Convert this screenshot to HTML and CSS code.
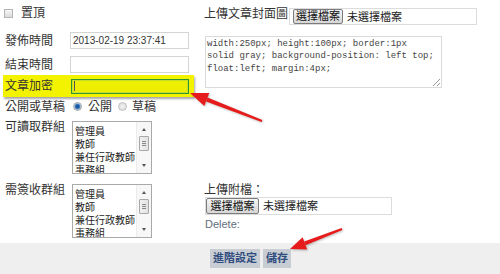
FILE: index.html
```html
<!DOCTYPE html>
<html lang="zh-Hant">
<head>
<meta charset="utf-8">
<title>文章設定</title>
<link rel="stylesheet" href="styles.css">
</head>
<body>
<div class="page">
  <div class="main">
    <div class="left">
      <div class="row row-top"><span class="checkbox"></span><span class="lbl-top">置頂</span></div>
      <div class="row r1"><span class="label">發佈時間</span><span class="input">2013-02-19 23:37:41</span></div>
      <div class="row r2"><span class="label">結束時間</span><span class="input"></span></div>
      <div class="row row-hl"><span class="label label-hl">文章加密</span><span class="input input-hl"><span class="caret"></span></span></div>
      <div class="row row-radio">
        <span class="label label-radio">公開或草稿</span>
        <span class="radio radio-on"></span><span class="radio-text">公開</span>
        <span class="radio radio-off"></span><span class="radio-text radio-text2">草稿</span>
      </div>
      <div class="row row-list">
        <span class="label label-list">可讀取群組</span>
        <div class="listbox">
          <div class="items"><div>管理員</div><div>教師</div><div>兼任行政教師</div><div>事務組</div></div>
          <div class="scroll"><span class="sc-up"></span><span class="thumb"><i></i><i></i><i></i></span><span class="sc-down"></span></div>
        </div>
      </div>
      <div class="row row-list row-list2">
        <span class="label label-list">需簽收群組</span>
        <div class="listbox listbox2">
          <div class="items"><div>管理員</div><div>教師</div><div>兼任行政教師</div><div>事務組</div></div>
          <div class="scroll"><span class="sc-up"></span><span class="thumb"><i></i><i></i><i></i></span><span class="sc-down"></span></div>
        </div>
      </div>
    </div>
    <div class="right">
      <div class="cover-row">
        <span class="cover-label">上傳文章封面圖</span>
        <div class="filebox"><span class="filebtn">選擇檔案</span><span class="filetext">未選擇檔案</span></div>
      </div>
      <div class="textarea">width:250px; height:100px; border:1px<br>solid gray; background-position: left top;<br>float:left; margin:4px;<span class="grip"></span></div>
      <div class="attach-label">上傳附檔：</div>
      <div class="filebox filebox2"><span class="filebtn filebtn2">選擇檔案</span><span class="filetext">未選擇檔案</span></div>
      <div class="delete">Delete:</div>
    </div>
  </div>
  <div class="footer">
    <span class="btn">進階設定</span>
    <span class="btn">儲存</span>
  </div>
  <svg class="arrows" width="500" height="274" viewBox="0 0 500 274">
    <g fill="#e61b1b">
      <polygon points="262.4,120.1 261.6,121.9 206.1,101.4 207.5,97.6"/>
      <polygon points="190,93 209.3,93.0 204.3,106.0"/>
      <polygon points="342.4,229.9 341.6,228.1 304.2,241.4 305.6,245.2"/>
      <polygon points="290,249 307.2,249.4 302.6,237.2"/>
    </g>
  </svg>
</div>
</body>
</html>
```
FILE: styles.css
```css
body {
  margin: 0;
  font-family: "Liberation Sans", "Noto Sans CJK TC", sans-serif;
  font-size: 12px;
  color: #333;
  background: #fff;
}
.page {
  position: relative;
  width: 500px;
  height: 274px;
  overflow: hidden;
}
.main {
  display: flex;
  height: 243px;
}
.left {
  width: 200px;
  flex: none;
  box-sizing: border-box;
  padding: 4px 0 0 3px;
  display: flex;
  flex-direction: column;
}
.row {
  display: flex;
  align-items: center;
  padding-left: 2px;
}
.row-top { height: 18px; }
.checkbox {
  width: 9px;
  height: 9px;
  box-sizing: border-box;
  border: 1px solid #b4b4b4;
  background: linear-gradient(#f6f6f6, #dcdcdc);
  margin-left: -1px;
}
.lbl-top { margin-left: 8px; line-height: 14px; }
.label {
  width: 65px;
  flex: none;
  line-height: 14px;
}
.input {
  width: 119px;
  height: 17px;
  box-sizing: border-box;
  border: 1px solid #d4d4d4;
  font-size: 10px;
  line-height: 15px;
  padding-left: 2px;
  color: #333;
  background: #fff;
}
.r1 { margin-top: 10px; }
.r2 { margin-top: 7px; }
.row-hl {
  margin-top: 2px;
  height: 22px;
  width: 191px;
  box-sizing: border-box;
  background: #f3f300;
  box-shadow: 1px 2px 2px rgba(0, 0, 0, 0.35);
}
.label-hl { width: 66px; }
.input-hl {
  width: 118px;
  height: 15px;
  border: 1px solid #2f962f;
  box-shadow: inset 0 0 0 1px #c4df2a;
  background: #eeee00;
  display: flex;
  align-items: center;
  padding-left: 2px;
}
.caret {
  width: 1px;
  height: 10px;
  background: #555;
}
.row-radio {
  margin-top: 2px;
  height: 15px;
}
.label-radio { width: 68px; }
.radio {
  width: 9px;
  height: 9px;
  box-sizing: border-box;
  border-radius: 50%;
  border: 1px solid #a4a4a4;
  flex: none;
}
.radio-on {
  background: radial-gradient(circle, #1b5aa0 0 1.6px, #5c93cf 2.6px, #dfe6ee 3.5px);
}
.radio-off {
  background: radial-gradient(circle, #f4f4f4 0, #dadada 4px);
  border-color: #c0c0c0;
  margin-left: 6px;
}
.radio-text { margin-left: 6px; line-height: 14px; }
.radio-text2 { margin-left: 5px; }
.row-list {
  align-items: flex-start;
  margin-top: 7px;
}
.row-list2 { margin-top: 10px; }
.label-list { width: 67px; margin-top: -1px; }
.listbox {
  width: 80px;
  height: 53px;
  box-sizing: border-box;
  border: 1px solid #a9a9a9;
  display: flex;
  overflow: hidden;
  background: #fff;
}
.listbox2 { height: 54px; }
.items {
  flex: 1;
  padding: 3px 0 0 2px;
  font-size: 10px;
  line-height: 13px;
  white-space: nowrap;
  color: #222;
}
.scroll {
  width: 14px;
  flex: none;
  display: flex;
  flex-direction: column;
  align-items: center;
  background: #f7f7f7;
  border-left: 1px solid #ececec;
}
.sc-up, .sc-down {
  width: 0;
  height: 0;
  border-left: 2.5px solid transparent;
  border-right: 2.5px solid transparent;
}
.sc-up {
  margin-top: 6px;
  border-bottom: 3px solid #555;
}
.sc-down {
  margin-top: auto;
  margin-bottom: 6px;
  border-top: 3px solid #555;
}
.thumb {
  margin-top: 5px;
  width: 10px;
  height: 15px;
  box-sizing: border-box;
  border: 1px solid #a8a8a8;
  border-radius: 1px;
  background: linear-gradient(90deg, #f2f2f2, #e2e2e2);
  display: flex;
  flex-direction: column;
  align-items: center;
  justify-content: center;
  gap: 1px;
}
.thumb i {
  display: block;
  width: 4px;
  height: 1px;
  background: #888;
}
.right {
  flex: 1;
  box-sizing: border-box;
  padding: 8px 0 0 4px;
  display: flex;
  flex-direction: column;
  align-items: flex-start;
}
.cover-row {
  display: flex;
  align-items: flex-start;
  height: 17px;
}
.cover-label {
  width: 85px;
  line-height: 14px;
  margin-top: -1px;
}
.filebox {
  width: 188px;
  height: 17px;
  box-sizing: border-box;
  border: 1px solid #dcdcdc;
  display: flex;
  align-items: center;
  font-size: 11px;
  color: #222;
}
.filebtn {
  margin-left: 3px;
  width: 50px;
  height: 15px;
  box-sizing: border-box;
  border: 1px solid #7c7c7c;
  border-radius: 2px;
  background: linear-gradient(#f4f4f4, #d6d6d6);
  text-align: center;
  line-height: 13px;
  color: #111;
}
.filetext { margin-left: 4px; line-height: 14px; }
.textarea {
  position: relative;
  margin: 11px 0 0 1px;
  width: 237px;
  height: 52px;
  box-sizing: border-box;
  border: 1px solid #dadada;
  padding: 1px 0 0 1px;
  font-family: "Liberation Mono", monospace;
  font-size: 9px;
  line-height: 12.3px;
  color: #444;
  white-space: nowrap;
}
.grip {
  position: absolute;
  right: 1px;
  bottom: 1px;
  width: 7px;
  height: 7px;
  background: linear-gradient(135deg, transparent 45%, #999 45%, #999 55%, transparent 55%, transparent 72%, #999 72%, #999 82%, transparent 82%);
}
.attach-label {
  margin-top: 95px;
  line-height: 14px;
}
.filebox2 {
  width: 187px;
  height: 18px;
  margin-left: 1px;
}
.filebtn2 {
  margin-left: 0;
  width: 53px;
  height: 16px;
  line-height: 14px;
}
.delete {
  margin: 2px 0 0 1px;
  font-size: 11px;
  line-height: 14px;
  color: #5f6e80;
}
.footer {
  height: 31px;
  box-sizing: border-box;
  background: #efefef;
  display: flex;
  align-items: flex-start;
  gap: 3px;
  padding: 6px 0 0 210px;
}
.btn {
  height: 19px;
  line-height: 19px;
  padding: 0 3px;
  background: #c8ccd3;
  color: #2f4d7e;
  font-weight: bold;
  font-size: 11px;
}
.arrows {
  position: absolute;
  left: 0;
  top: 0;
  pointer-events: none;
  filter: drop-shadow(1px 1px 1px rgba(0, 0, 0, 0.25));
}
```
